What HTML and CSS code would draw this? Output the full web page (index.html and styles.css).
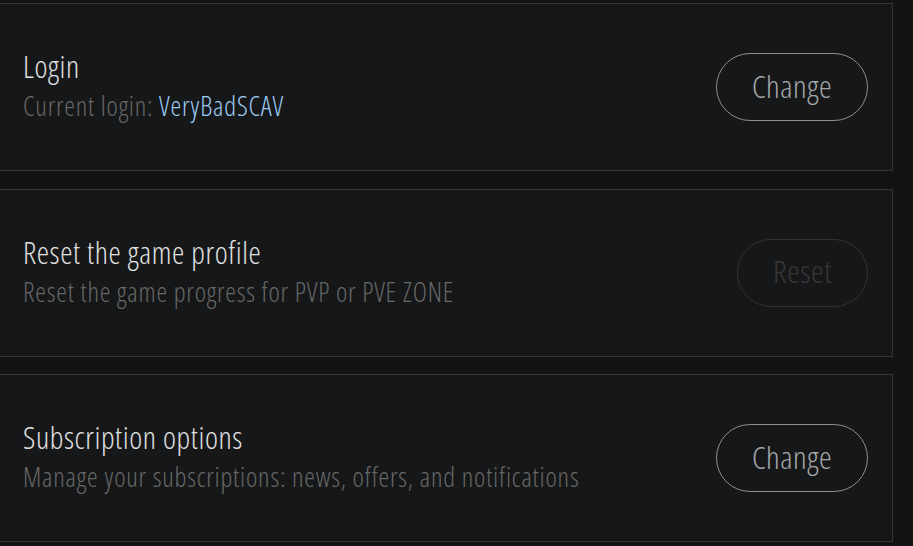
FILE: index.html
```html
<!DOCTYPE html>
<html lang="en">
<head>
<meta charset="utf-8">
<title>Account settings</title>
<link rel="stylesheet" href="styles.css">
</head>
<body>
<main class="settings">
  <section class="card">
    <div class="info">
      <h2 class="title">Login</h2>
      <p class="desc">Current login: <span class="login">VeryBadSCAV</span></p>
    </div>
    <button class="btn">Change</button>
  </section>
  <section class="card">
    <div class="info">
      <h2 class="title">Reset the game profile</h2>
      <p class="desc">Reset the game progress for PVP or PVE ZONE</p>
    </div>
    <button class="btn btn-disabled" disabled>Reset</button>
  </section>
  <section class="card">
    <div class="info">
      <h2 class="title">Subscription options</h2>
      <p class="desc">Manage your subscriptions: news, offers, and notifications</p>
    </div>
    <button class="btn">Change</button>
  </section>
</main>
</body>
</html>
```
FILE: styles.css
```css
html, body {
  margin: 0;
  padding: 0;
  background: #121314;
  height: 100%;
  overflow: hidden;
}
body {
  font-family: "Open Sans", "Roboto", sans-serif;
  font-stretch: 75%;
  font-weight: 300;
}
.settings {
  display: flex;
  flex-direction: column;
  gap: 17.5px;
  margin: 3px 20px 0 -20px;
}
.card {
  box-sizing: border-box;
  height: 168px;
  background: #161718;
  border: 1px solid #343536;
  display: flex;
  align-items: center;
  justify-content: space-between;
  padding: 0 24px 0 42px;
}
.info {
  display: flex;
  flex-direction: column;
  gap: 4px;
  padding-bottom: 4px;
}
.title {
  margin: 0;
  font-weight: 300;
  font-size: 31px;
  line-height: 38px;
  letter-spacing: 0.6px;
  color: #e0e0e0;
}
.desc {
  margin: 0;
  font-size: 27px;
  line-height: 34px;
  color: #666767;
  letter-spacing: 0.8px;
}
.login {
  color: #9ccbf2;
  font-weight: 350;
}
.btn {
  box-sizing: border-box;
  height: 68px;
  padding: 0 35px 3px;
  border-radius: 34px;
  border: 1.5px solid #8d8e8f;
  background: transparent;
  color: #a3a7aa;
  font-family: inherit;
  font-stretch: 75%;
  font-weight: 300;
  font-size: 32px;
  line-height: 1;
  letter-spacing: 0.5px;
  cursor: pointer;
}
.btn-disabled {
  border-color: #313233;
  color: #37383a;
  cursor: default;
}
```
